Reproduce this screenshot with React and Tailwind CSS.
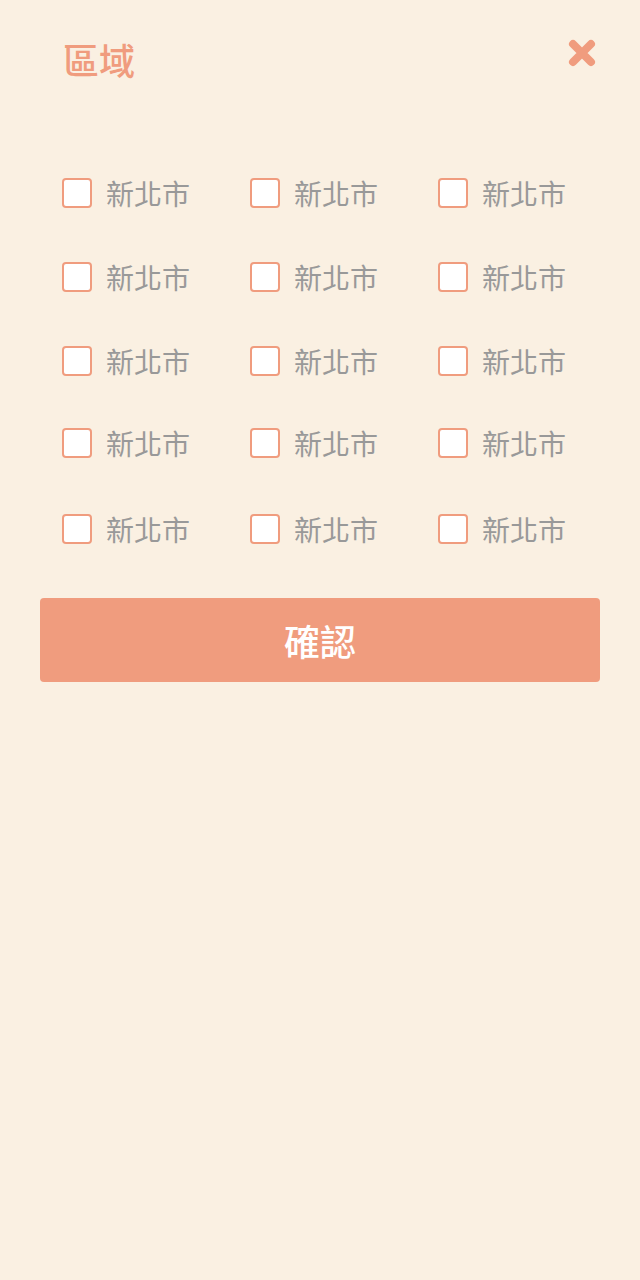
const rows = [
  { key: 'r1', cls: 'h-[84px]' },
  { key: 'r2', cls: 'h-[84px]' },
  { key: 'r3', cls: 'h-[82px]' },
  { key: 'r4', cls: 'h-[86px]' },
  { key: 'r5', cls: 'h-[84px]' },
]

function Check({ label }) {
  return (
    <label className="flex items-center gap-[14px]">
      <span className="w-[30px] h-[30px] rounded-[4px] border-2 border-[#f09c7e] bg-white" />
      <span className="text-[28px] leading-none text-[#999999]">{label}</span>
    </label>
  )
}

export default function App() {
  return (
    <div
      className="min-h-[1280px] w-[640px] bg-[#faf0e2]"
      style={{ fontFamily: '"Noto Sans CJK TC", "Noto Sans", sans-serif' }}
    >
      <div className="flex justify-between items-start pl-[63px] pr-[42px] pt-[38px]">
        <h1 className="text-[36px] leading-none font-medium text-[#f09c7e] pt-[3px]">區域</h1>
        <svg width="32" height="32" viewBox="0 0 32 32" className="mt-[-1px]">
          <path d="M7 7 L25 25 M25 7 L7 25" stroke="#f09c7e" strokeWidth="8" strokeLinecap="round" />
        </svg>
      </div>

      <div className="pt-[101px] px-[62px]">
        {rows.map(row => (
          <div key={row.key} className={`grid grid-cols-[188px_188px_1fr] items-start ${row.cls}`}>
            <Check label="新北市" />
            <Check label="新北市" />
            <Check label="新北市" />
          </div>
        ))}
      </div>

      <div className="px-[40px]">
        <button className="w-full h-[84px] rounded-[4px] bg-[#f09c7e] text-white text-[36px] font-medium">
          確認
        </button>
      </div>
    </div>
  )
}
